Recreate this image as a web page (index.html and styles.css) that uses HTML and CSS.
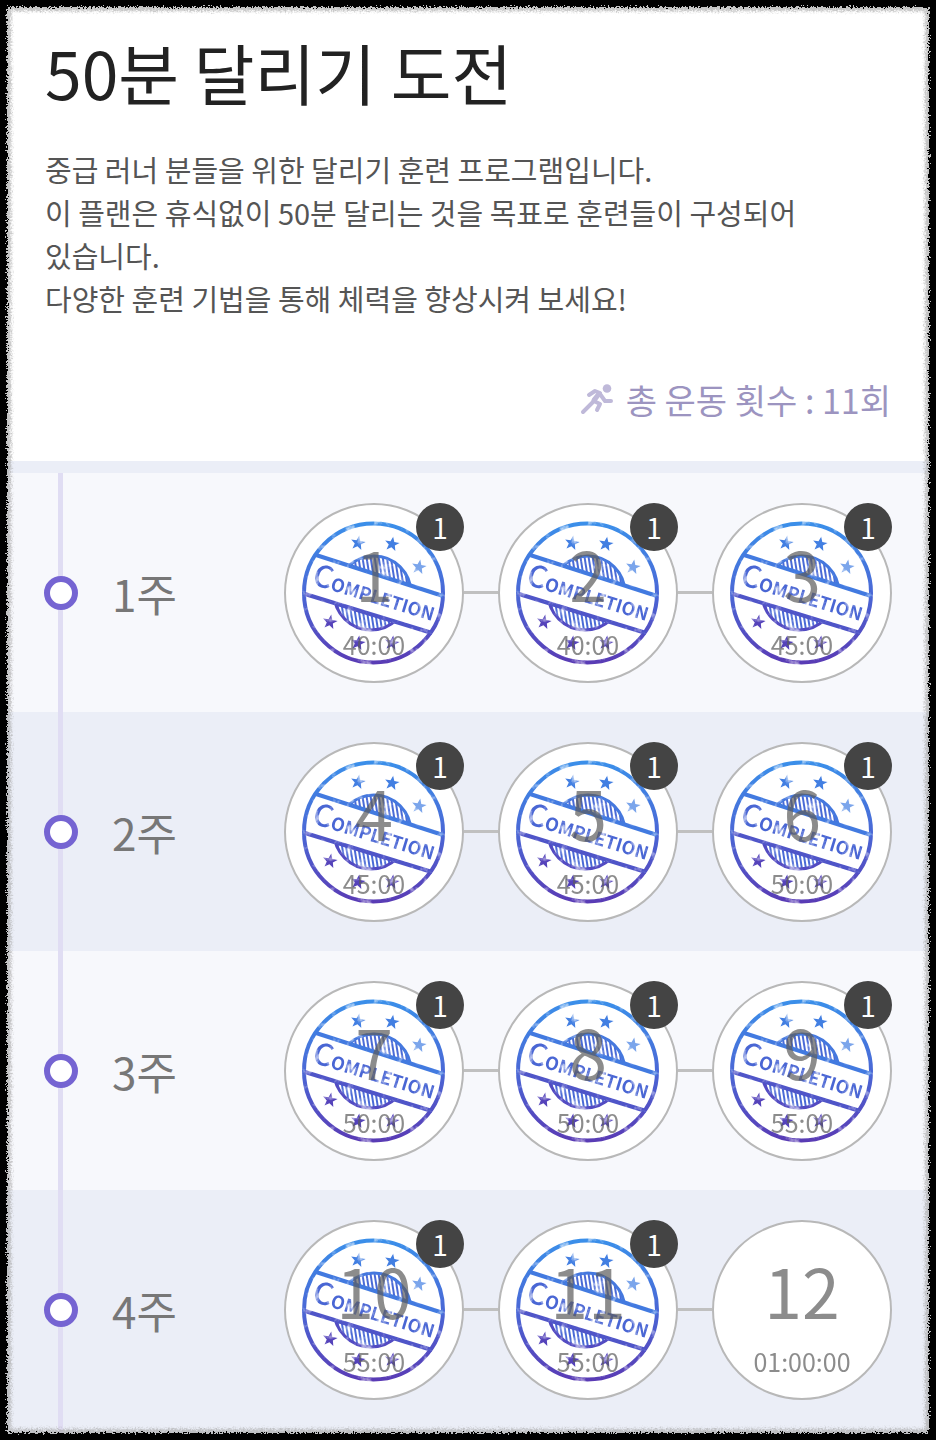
FILE: index.html
```html
<!DOCTYPE html>
<html lang="ko">
<head>
  <meta charset="UTF-8">
  <meta name="viewport" content="width=device-width, initial-scale=1">
  <title>50분 달리기 도전</title>
  <link rel="stylesheet" href="styles.css">
</head>
<body>

<!-- Shared drawings -->
<svg class="defs" width="0" height="0" aria-hidden="true">
  <defs>
    <linearGradient id="ink" gradientUnits="userSpaceOnUse" x1="0" y1="18" x2="0" y2="162">
      <stop offset="0" stop-color="#3a90ea"/>
      <stop offset="0.5" stop-color="#4a68d6"/>
      <stop offset="1" stop-color="#5a3ab4"/>
    </linearGradient>
    <pattern id="hatch" width="4" height="10" patternUnits="userSpaceOnUse" patternTransform="rotate(-9)">
      <rect width="2" height="10" fill="#4a6ad6"/>
    </pattern>
    <clipPath id="aboveBand"><path d="M0 41.500 180 99.500V0H0z"/></clipPath>
    <clipPath id="belowBand"><path d="M0 84.500 180 139.500V180H0z"/></clipPath>
    <filter id="worn" x="0" y="0" width="100%" height="100%">
      <feTurbulence type="fractalNoise" baseFrequency="0.083" numOctaves="4" seed="21" result="noise"/>
      <feColorMatrix in="noise" type="matrix" values="0 0 0 0 0  0 0 0 0 0  0 0 0 0 0  -2.500 0 0 0 2.350" result="holes"/>
      <feComposite in="SourceGraphic" in2="holes" operator="in"/>
    </filter>
    <filter id="rough" x="0" y="0" width="100%" height="100%">
      <feTurbulence type="fractalNoise" baseFrequency="0.6" numOctaves="2" seed="3" result="noise"/>
      <feDisplacementMap in="SourceGraphic" in2="noise" scale="7" xChannelSelector="R" yChannelSelector="G"/>
    </filter>
    <path id="star" d="M0-7.500 1.900-2.400 7.300-2.200 3.100 1.100 4.500 6.300 0 3.300-4.500 6.300-3.100 1.100-7.300-2.200-1.900-2.400z"/>
  </defs>

  <symbol id="stamp" viewBox="0 0 180 180">
    <circle cx="89.500" cy="90" r="69.500" fill="none" stroke="url(#ink)" stroke-width="4"/>
    <g clip-path="url(#aboveBand)">
      <circle cx="90" cy="90" r="37" fill="url(#hatch)" stroke="#4578de" stroke-width="3"/>
    </g>
    <g clip-path="url(#belowBand)">
      <circle cx="87" cy="90" r="37" fill="url(#hatch)" stroke="#534cc2" stroke-width="3"/>
    </g>
    <path d="M32 52 159 93" fill="none" stroke="#437ae0" stroke-width="4"/>
    <path d="M21 91 148 130" fill="none" stroke="#5054c8" stroke-width="4"/>
    <g fill="#437fe2">
      <use href="#star" transform="translate(74 40) rotate(10)"/>
      <use href="#star" transform="translate(108 41) rotate(10)"/>
      <use href="#star" transform="translate(135 64) rotate(10)" opacity="0.700"/>
    </g>
    <g fill="#5443ba">
      <use href="#star" transform="translate(46 119) rotate(10)"/>
      <use href="#star" transform="translate(74 140) rotate(10)"/>
      <use href="#star" transform="translate(108 140) rotate(10)"/>
    </g>
  </symbol>
</svg>

<main class="page">
  <header class="intro">
    <h1>50분 달리기 도전</h1>
    <p class="description">
      중급 러너 분들을 위한 달리기 훈련 프로그램입니다.<br>
      이 플랜은 휴식없이 50분 달리는 것을 목표로 훈련들이 구성되어 있습니다.<br>
      다양한 훈련 기법을 통해 체력을 향상시켜 보세요!
    </p>
    <p class="total">
      <svg class="runner" viewBox="0 0 34 32" aria-hidden="true">
        <circle cx="27" cy="4.500" r="4.300" fill="currentColor"/>
        <g fill="none" stroke="currentColor" stroke-width="4" stroke-linecap="round" stroke-linejoin="round">
          <path d="M9 11 15 7 20 9 13 18 3 28"/>
          <path d="M20 10 25 17 31 17"/>
          <path d="M14 17 20 20 17 26"/>
          <path d="M18 11 14 16" stroke-width="5"/>
        </g>
      </svg>
      <span>총 운동 횟수 : 11회</span>
    </p>
  </header>

  <ol class="weeks">
    <li class="week">
      <span class="dot"></span>
      <h2>1주</h2>
      <div class="days">
        <button class="day" type="button">
          <span class="num">1</span><span class="time">40:00</span>
          <svg class="stamp" viewBox="0 0 180 180"><use href="#stamp"/><text transform="translate(27 81) rotate(17)"><tspan class="cap">C</tspan>OMPLETION</text></svg>
          <span class="badge">1</span>
        </button>
        <button class="day" type="button">
          <span class="num">2</span><span class="time">40:00</span>
          <svg class="stamp" viewBox="0 0 180 180"><use href="#stamp"/><text transform="translate(27 81) rotate(17)"><tspan class="cap">C</tspan>OMPLETION</text></svg>
          <span class="badge">1</span>
        </button>
        <button class="day" type="button">
          <span class="num">3</span><span class="time">45:00</span>
          <svg class="stamp" viewBox="0 0 180 180"><use href="#stamp"/><text transform="translate(27 81) rotate(17)"><tspan class="cap">C</tspan>OMPLETION</text></svg>
          <span class="badge">1</span>
        </button>
      </div>
    </li>
    <li class="week">
      <span class="dot"></span>
      <h2>2주</h2>
      <div class="days">
        <button class="day" type="button">
          <span class="num">4</span><span class="time">45:00</span>
          <svg class="stamp" viewBox="0 0 180 180"><use href="#stamp"/><text transform="translate(27 81) rotate(17)"><tspan class="cap">C</tspan>OMPLETION</text></svg>
          <span class="badge">1</span>
        </button>
        <button class="day" type="button">
          <span class="num">5</span><span class="time">45:00</span>
          <svg class="stamp" viewBox="0 0 180 180"><use href="#stamp"/><text transform="translate(27 81) rotate(17)"><tspan class="cap">C</tspan>OMPLETION</text></svg>
          <span class="badge">1</span>
        </button>
        <button class="day" type="button">
          <span class="num">6</span><span class="time">50:00</span>
          <svg class="stamp" viewBox="0 0 180 180"><use href="#stamp"/><text transform="translate(27 81) rotate(17)"><tspan class="cap">C</tspan>OMPLETION</text></svg>
          <span class="badge">1</span>
        </button>
      </div>
    </li>
    <li class="week">
      <span class="dot"></span>
      <h2>3주</h2>
      <div class="days">
        <button class="day" type="button">
          <span class="num">7</span><span class="time">50:00</span>
          <svg class="stamp" viewBox="0 0 180 180"><use href="#stamp"/><text transform="translate(27 81) rotate(17)"><tspan class="cap">C</tspan>OMPLETION</text></svg>
          <span class="badge">1</span>
        </button>
        <button class="day" type="button">
          <span class="num">8</span><span class="time">50:00</span>
          <svg class="stamp" viewBox="0 0 180 180"><use href="#stamp"/><text transform="translate(27 81) rotate(17)"><tspan class="cap">C</tspan>OMPLETION</text></svg>
          <span class="badge">1</span>
        </button>
        <button class="day" type="button">
          <span class="num">9</span><span class="time">55:00</span>
          <svg class="stamp" viewBox="0 0 180 180"><use href="#stamp"/><text transform="translate(27 81) rotate(17)"><tspan class="cap">C</tspan>OMPLETION</text></svg>
          <span class="badge">1</span>
        </button>
      </div>
    </li>
    <li class="week">
      <span class="dot"></span>
      <h2>4주</h2>
      <div class="days">
        <button class="day" type="button">
          <span class="num">10</span><span class="time">55:00</span>
          <svg class="stamp" viewBox="0 0 180 180"><use href="#stamp"/><text transform="translate(27 81) rotate(17)"><tspan class="cap">C</tspan>OMPLETION</text></svg>
          <span class="badge">1</span>
        </button>
        <button class="day" type="button">
          <span class="num">11</span><span class="time">55:00</span>
          <svg class="stamp" viewBox="0 0 180 180"><use href="#stamp"/><text transform="translate(27 81) rotate(17)"><tspan class="cap">C</tspan>OMPLETION</text></svg>
          <span class="badge">1</span>
        </button>
        <button class="day" type="button">
          <span class="num">12</span><span class="time">01:00:00</span>
        </button>
      </div>
    </li>
  </ol>
</main>

<div class="frame"></div>

</body>
</html>
```
FILE: styles.css
```css
/* --- RESET & BASE --- */
* {
  margin: 0;
  padding: 0;
  box-sizing: border-box;
}

html {
  overflow-x: hidden;
}

body {
  position: relative;
  min-height: 100vh;
  background: #fff;
  font-family: "Noto Sans CJK JP", "Noto Sans CJK KR", sans-serif;
  font-feature-settings: "locl" 0; /* keeps the colon on the baseline */
  color: #222;
}

.defs {
  position: absolute;
}

.page {
  display: flex;
  flex-direction: column;
  min-height: 100vh;
}

/* --- INTRO --- */
.intro {
  padding: 31px 45px 36px;
  border-bottom: 12px solid #ebeef7;
}

.intro h1 {
  font-size: 66px;
  line-height: 80px;
  font-weight: 400;
}

.description {
  margin-top: 37px;
  font-size: 29px;
  line-height: 43px;
  color: #555;
  word-break: keep-all;
}

.total {
  display: flex;
  justify-content: flex-end;
  align-items: center;
  gap: 12px;
  margin-top: 55px;
  font-size: 34px;
  line-height: 50px;
  color: #9c94c0;
}

.runner {
  width: 34px;
  height: 32px;
  color: #bfb9d9;
}

/* --- WEEKS --- */
.weeks {
  flex: 1;
  display: flex;
  flex-direction: column;
  list-style: none;
}

.week {
  position: relative;
  display: flex;
  align-items: center;
  padding: 30px 44px 29px;
  background: #f7f8fc;
}

.week:nth-child(even) {
  background: #ebeef7;
}

.week:last-child {
  flex: 1;
  align-items: flex-start;
}

.week:last-child .dot {
  margin-top: 73px;
}

.week:last-child h2 {
  margin-top: 60px;
}

/* vertical line behind the dots */
.week::before {
  content: "";
  position: absolute;
  top: 0;
  bottom: 0;
  left: 58px;
  width: 5px;
  background: #e0ddf3;
}

.dot {
  position: relative;
  width: 34px;
  height: 34px;
  border: 6px solid #7564d2;
  border-radius: 50%;
  background: #fff;
}

.week h2 {
  margin-left: 34px;
  font-size: 44px;
  line-height: 60px;
  font-weight: 400;
  color: #777;
}

.days {
  display: flex;
  align-items: center;
  gap: 34px;
  margin-left: auto;
}

.day {
  position: relative;
  display: flex;
  flex-direction: column;
  align-items: center;
  width: 180px;
  height: 180px;
  padding-top: 34px;
  border: 2px solid #b8b8b8;
  border-radius: 50%;
  background: #fff;
  font-family: inherit;
  font-feature-settings: inherit;
  cursor: pointer;
}

/* line to the next day */
.day:not(:last-child)::after {
  content: "";
  position: absolute;
  top: 86px;
  left: 178px;
  width: 34px;
  height: 3px;
  background: #c0c0c0;
}

.num,
.time {
  position: relative;
  z-index: 1;
  color: #5c5c5c;
  opacity: 0.7;
}

.num {
  font-size: 68px;
  line-height: 68px;
}

.time {
  margin-top: 22px;
  font-size: 25px;
  line-height: 30px;
}

/* --- STAMP --- */
.stamp {
  position: absolute;
  top: -2px;
  left: -2px;
  width: 180px;
  height: 180px;
  filter: url(#worn);
}

.stamp text {
  font-size: 18px;
  font-weight: 700;
  fill: #4a66d4;
}

.stamp .cap {
  font-size: 30px;
  font-weight: 500;
}

.badge {
  position: absolute;
  top: -2px;
  right: -2px;
  z-index: 2;
  width: 48px;
  height: 48px;
  border-radius: 50%;
  background: #444;
  color: #fff;
  font-size: 28px;
  line-height: 48px;
  text-align: center;
}

/* --- TORN PAPER FRAME --- */
.frame {
  position: absolute;
  inset: 0;
  border: 7px solid #000;
  border-radius: 4px;
  outline: 8px solid #000;
  outline-offset: -4px;
  box-shadow: inset 0 0 3px 4px rgba(170, 170, 170, 0.7);
  filter: url(#rough);
  pointer-events: none;
  z-index: 3;
}
```
